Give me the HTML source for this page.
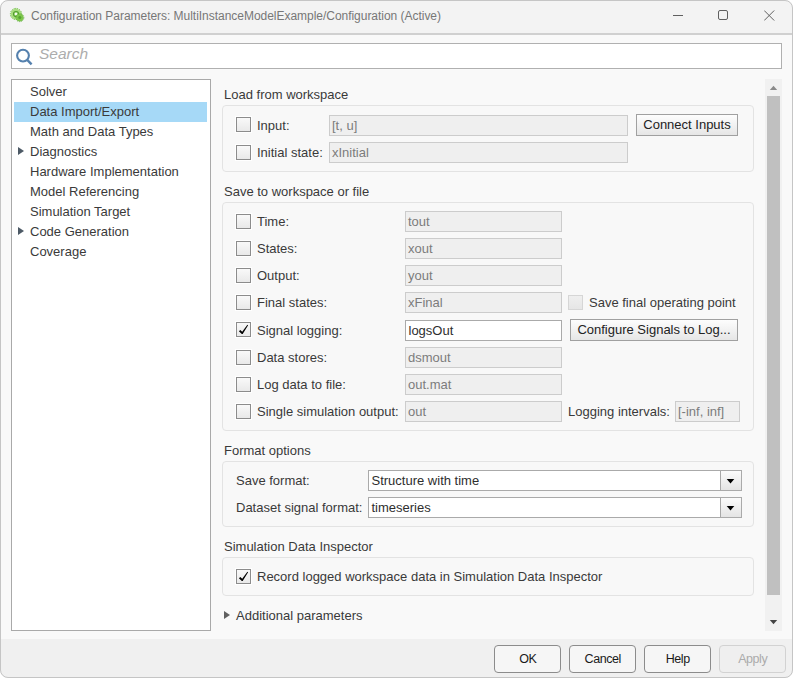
<!DOCTYPE html>
<html><head><meta charset="utf-8">
<style>
html,body{margin:0;padding:0;width:793px;height:678px;overflow:hidden;background:#fff;}
*{box-sizing:border-box;}
body{font-family:"Liberation Sans",sans-serif;font-size:13px;color:#333;position:relative;}
.abs{position:absolute;}
.win{position:absolute;left:0;top:0;width:793px;height:678px;border-radius:8px;background:#f9f9f9;overflow:hidden;}
.frame{position:absolute;left:0;top:0;width:793px;height:678px;border:1px solid #c5c5c5;border-radius:8px;pointer-events:none;}
.title{position:absolute;left:0;top:0;width:793px;height:35px;background:#f3f3f3;border-bottom:2px solid #d0d0d0;}
.ttxt{position:absolute;left:31px;top:9px;font-size:12px;color:#777;letter-spacing:-0.03px;white-space:nowrap;}
.search{position:absolute;left:11px;top:43px;width:771px;height:26px;background:#fff;border:1px solid #b0b0b0;}
.tree{position:absolute;left:11px;top:79px;width:200px;height:552px;background:#fff;border:1px solid #a9a9a9;}
.ti{position:absolute;left:18px;height:20px;line-height:22px;white-space:nowrap;color:#3a3a3a;}
.sel{position:absolute;left:2px;top:22px;width:193px;height:20px;background:#a6d9f7;}
.tri{position:absolute;width:0;height:0;border-top:4px solid transparent;border-bottom:4px solid transparent;border-left:6px solid #616161;}
.lbl{position:absolute;white-space:nowrap;color:#3a3a3a;line-height:16px;}
.hdr{position:absolute;white-space:nowrap;color:#3a3a3a;line-height:16px;}
.grp{position:absolute;border:1px solid #e3e3e3;border-radius:4px;background:#f8f8f8;}
.cb{position:absolute;width:15px;height:15px;border:1px solid #8c8c8c;background:linear-gradient(#f9f9f9,#e9e9e9);box-shadow:0 0 0 1px #fff;}
.fld{position:absolute;height:21px;border:1px solid #cccccc;background:#efefef;color:#7c7c7c;line-height:19px;padding-left:2px;white-space:nowrap;}
.fldw{position:absolute;height:21px;border:1px solid #aaa;background:#fff;color:#2e2e2e;line-height:19px;padding-left:2.5px;white-space:nowrap;}
.btn{position:absolute;height:22px;border:1px solid #a0a0a0;background:linear-gradient(#fdfdfd,#e6e6e6);color:#222;line-height:20px;text-align:center;white-space:nowrap;}
.sb{position:absolute;left:765px;top:79px;width:17px;height:552px;background:#f1f1f1;}
.bbar{position:absolute;left:0;top:639px;width:793px;height:39px;background:#f0f0f0;}
.dbtn{position:absolute;top:645px;width:67px;height:28px;border:1px solid #8c8c8c;border-radius:4px;background:#f6f6f6;color:#1a1a1a;font-size:12.5px;line-height:26px;text-align:center;letter-spacing:-0.45px;text-indent:0.45px;}
</style></head><body>
<div class="win">
  <div class="title">
    <svg class="abs" style="left:9px;top:7px" width="16" height="16" viewBox="0 0 16 16">
      <circle cx="7" cy="7" r="5.2" fill="#a6dc7c"/>
      <circle cx="7" cy="7" r="5.6" fill="none" stroke="#72c046" stroke-width="1" stroke-dasharray="1.5 0.9"/>
      <circle cx="7" cy="7" r="2.5" fill="none" stroke="#4f9d2e" stroke-width="1.2"/>
      <circle cx="7" cy="7" r="1.3" fill="#f4fbef"/>
      <circle cx="10.8" cy="10.6" r="3.6" fill="#7cc64a"/>
      <circle cx="10.8" cy="10.6" r="4" fill="none" stroke="#5aaa34" stroke-width="0.9" stroke-dasharray="1.2 0.8"/>
      <circle cx="10.8" cy="10.6" r="1.5" fill="#55a330"/>
    </svg>
    <div class="ttxt">Configuration Parameters: MultiInstanceModelExample/Configuration (Active)</div>
    <div class="abs" style="left:673px;top:15px;width:10px;height:1px;background:#606060"></div>
    <div class="abs" style="left:718px;top:10px;width:10px;height:10px;border:1px solid #606060;border-radius:2px"></div>
    <svg class="abs" style="left:764px;top:10px" width="11" height="11" viewBox="0 0 11 11"><path d="M0.2 0.5L10.2 10.5M10.2 0.5L0.2 10.5" stroke="#606060" stroke-width="1"/></svg>
  </div>

  <div class="search">
    <svg class="abs" style="left:3px;top:4px" width="18" height="18" viewBox="0 0 18 18"><circle cx="8" cy="7.6" r="5.9" fill="none" stroke="#5581ae" stroke-width="2.1"/><path d="M12.2 11.9L16.6 16.4" stroke="#5581ae" stroke-width="2.4"/></svg>
    <div class="abs" style="left:27px;top:0px;font-size:15.5px;font-style:italic;color:#adadad;line-height:20px">Search</div>
  </div>

  <div class="tree">
    <div class="sel"></div>
    <div class="ti" style="top:1px">Solver</div>
    <div class="ti" style="top:21px">Data Import/Export</div>
    <div class="ti" style="top:41px">Math and Data Types</div>
    <div class="tri" style="left:6px;top:67px;border-left-color:#4d5a66"></div>
    <div class="ti" style="top:61px">Diagnostics</div>
    <div class="ti" style="top:81px">Hardware Implementation</div>
    <div class="ti" style="top:101px">Model Referencing</div>
    <div class="ti" style="top:121px">Simulation Target</div>
    <div class="tri" style="left:6px;top:147px;border-left-color:#4d5a66"></div>
    <div class="ti" style="top:141px">Code Generation</div>
    <div class="ti" style="top:161px">Coverage</div>
  </div>

  <!-- right content -->
  <div class="hdr" style="left:224px;top:87px">Load from workspace</div>
  <div class="grp" style="left:222px;top:105px;width:532px;height:67px"></div>
  <div class="cb" style="left:236px;top:117px"></div>
  <div class="lbl" style="left:257px;top:118px">Input:</div>
  <div class="fld" style="left:329px;top:115px;width:299px">[t, u]</div>
  <div class="btn" style="left:636px;top:114px;width:102px">Connect Inputs</div>
  <div class="cb" style="left:236px;top:145px"></div>
  <div class="lbl" style="left:257px;top:145px">Initial state:</div>
  <div class="fld" style="left:329px;top:142px;width:299px">xInitial</div>

  <div class="hdr" style="left:224px;top:184px">Save to workspace or file</div>
  <div class="grp" style="left:222px;top:202px;width:532px;height:229px"></div>
  <div class="cb" style="left:236px;top:214px"></div><div class="lbl" style="left:257px;top:214px">Time:</div><div class="fld" style="left:405px;top:211px;width:157px">tout</div>
  <div class="cb" style="left:236px;top:241px"></div><div class="lbl" style="left:257px;top:241px">States:</div><div class="fld" style="left:405px;top:238px;width:157px">xout</div>
  <div class="cb" style="left:236px;top:268px"></div><div class="lbl" style="left:257px;top:268px">Output:</div><div class="fld" style="left:405px;top:265px;width:157px">yout</div>
  <div class="cb" style="left:236px;top:295px"></div><div class="lbl" style="left:257px;top:295px">Final states:</div><div class="fld" style="left:405px;top:292px;width:157px">xFinal</div>
  <div class="cb" style="left:568px;top:295px;border-color:#d6d6d6;background:linear-gradient(#efefef,#e6e6e6);box-shadow:none"></div><div class="lbl" style="left:589px;top:295px">Save final operating point</div>
  <div class="cb" style="left:236px;top:322px"><svg class="abs" style="left:1px;top:1px" width="13" height="13" viewBox="0 0 13 13"><path d="M0.9 7.3L2.3 5.9L4.2 7.7L9.4 0.7L10.1 1.3L4.7 10.1H3.8Z" fill="#000"/></svg></div><div class="lbl" style="left:257px;top:323px">Signal logging:</div><div class="fldw" style="left:405px;top:320px;width:157px">logsOut</div>
  <div class="btn" style="left:570px;top:319px;width:168px">Configure Signals to Log...</div>
  <div class="cb" style="left:236px;top:350px"></div><div class="lbl" style="left:257px;top:350px">Data stores:</div><div class="fld" style="left:405px;top:347px;width:157px">dsmout</div>
  <div class="cb" style="left:236px;top:377px"></div><div class="lbl" style="left:257px;top:377px">Log data to file:</div><div class="fld" style="left:405px;top:374px;width:157px">out.mat</div>
  <div class="cb" style="left:236px;top:404px"></div><div class="lbl" style="left:257px;top:404px">Single simulation output:</div><div class="fld" style="left:405px;top:401px;width:157px">out</div>
  <div class="lbl" style="left:568px;top:404px">Logging intervals:</div><div class="fld" style="left:675px;top:401px;width:65px">[-inf, inf]</div>

  <div class="hdr" style="left:224px;top:443px">Format options</div>
  <div class="grp" style="left:222px;top:461px;width:532px;height:66px"></div>
  <div class="lbl" style="left:236px;top:473px">Save format:</div>
  <div class="fldw" style="left:368px;top:470px;width:374px">Structure with time<div class="abs" style="right:0;top:0;width:21px;height:19px;border-left:1px solid #a8a8a8;background:linear-gradient(#fbfbfb,#e4e4e4)"><svg class="abs" style="left:5px;top:7px" width="9" height="7" viewBox="0 0 9 7"><path d="M0.7 1.1H8.3L4.5 5.4Z" fill="#000"/></svg></div></div>
  <div class="lbl" style="left:236px;top:500px">Dataset signal format:</div>
  <div class="fldw" style="left:368px;top:497px;width:374px">timeseries<div class="abs" style="right:0;top:0;width:21px;height:19px;border-left:1px solid #a8a8a8;background:linear-gradient(#fbfbfb,#e4e4e4)"><svg class="abs" style="left:5px;top:7px" width="9" height="7" viewBox="0 0 9 7"><path d="M0.7 1.1H8.3L4.5 5.4Z" fill="#000"/></svg></div></div>

  <div class="hdr" style="left:224px;top:539px">Simulation Data Inspector</div>
  <div class="grp" style="left:222px;top:557px;width:532px;height:39px"></div>
  <div class="cb" style="left:236px;top:569px"><svg class="abs" style="left:1px;top:1px" width="13" height="13" viewBox="0 0 13 13"><path d="M0.9 7.3L2.3 5.9L4.2 7.7L9.4 0.7L10.1 1.3L4.7 10.1H3.8Z" fill="#000"/></svg></div><div class="lbl" style="left:257px;top:569px">Record logged workspace data in Simulation Data Inspector</div>

  <div class="tri" style="left:224px;top:611px"></div>
  <div class="hdr" style="left:236px;top:608px">Additional parameters</div>

  <div class="sb"></div>
  <svg class="abs" style="left:769px;top:85px" width="9" height="6" viewBox="0 0 9 6"><path d="M0.8 5H8.2L4.5 0.8Z" fill="#8a8a8a"/></svg>
  <div class="abs" style="left:767px;top:96px;width:13px;height:499px;background:#c0c0c0"></div>
  <svg class="abs" style="left:769px;top:619px" width="9" height="6" viewBox="0 0 9 6"><path d="M0.8 1H8.2L4.5 5.2Z" fill="#444"/></svg>

  <div class="bbar"></div>
  <div class="dbtn" style="left:494px">OK</div>
  <div class="dbtn" style="left:569px">Cancel</div>
  <div class="dbtn" style="left:644px">Help</div>
  <div class="dbtn" style="left:719px;color:#ababab;border-color:#d2d2d2;background:#efefef">Apply</div>
</div>
<div class="frame"></div>
</body></html>
